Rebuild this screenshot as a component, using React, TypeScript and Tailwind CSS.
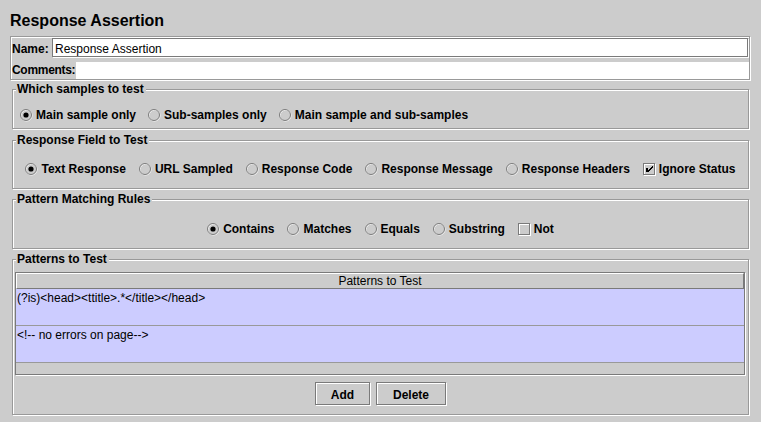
import React from 'react';

const Radio = ({ checked = false }: { checked?: boolean }) => (
  <svg width="13" height="13" viewBox="0 0 13 13" className="shrink-0">
    <circle cx="6.5" cy="6.5" r="5.5" fill="none" stroke="#ffffff" />
    <circle cx="6" cy="6" r="5.5" fill="none" stroke="#7a7a7a" />
    {checked && <circle cx="6" cy="6" r="2.6" fill="#000000" />}
  </svg>
);

const Checkbox = ({ checked = false }: { checked?: boolean }) => (
  <svg width="13" height="13" viewBox="0 0 13 13" className="shrink-0" shapeRendering="crispEdges">
    <rect x="1.5" y="1.5" width="11" height="11" fill="none" stroke="#ffffff" />
    <rect x="0.5" y="0.5" width="11" height="11" fill="none" stroke="#7a7a7a" />
    {checked && (
      <g fill="#000000">
        <rect x="3" y="5" width="2" height="4" />
        <path d="M9 3h1v1h-1zM8 4h2v1h-2zM7 5h2v1h-2zM6 6h2v1h-2zM5 7h2v1h-2zM5 8h1v1h-1z" />
      </g>
    )}
  </svg>
);

const Option = ({ label, checked, box }: { label: string; checked?: boolean; box?: boolean }) => (
  <div className="flex items-center gap-[3px]">
    {box ? <Checkbox checked={checked} /> : <Radio checked={checked} />}
    <span className="text-[12px] leading-[14px] font-bold whitespace-nowrap">{label}</span>
  </div>
);

const Group = ({
  title,
  className,
  children,
}: {
  title: string;
  className: string;
  children: React.ReactNode;
}) => (
  <div
    className={`relative mx-[2px] border border-[#999999] shadow-[inset_1px_1px_0_#ffffff,1px_1px_0_#ffffff] ${className}`}
  >
    <span className="absolute left-[3px] -top-[8px] bg-[#cccccc] pl-[1px] pr-[2px] text-[12px] leading-[14px] font-bold whitespace-nowrap">
      {title}
    </span>
    {children}
  </div>
);

const Button = ({ label, width }: { label: string; width: string }) => (
  <div
    className={`${width} h-[23px] pt-[2px] flex items-center justify-center border border-[#7a7a7a] shadow-[inset_1px_1px_0_#ffffff,1px_1px_0_#ffffff] text-[12px] leading-[14px] font-bold`}
  >
    {label}
  </div>
);

const patterns = ['(?is)<head><ttitle>.*</title></head>', '<!-- no errors on page-->'];

export default function App() {
  return (
    <div className="w-[761px] h-[422px] overflow-hidden bg-[#cccccc] px-[10px] flex flex-col text-black font-['Liberation_Sans',Arial,sans-serif]">
      <div className="h-[36px] pt-[11px] text-[16px] leading-[20px] font-bold">Response Assertion</div>

      {/* Name / comments */}
      <div className="h-[44px] mr-[1px] border border-[#999999] shadow-[inset_1px_1px_0_#ffffff,1px_1px_0_#ffffff] pt-[1px] flex flex-col">
        <div className="flex h-[20px]">
          <div className="w-[41px] pl-[1px] pt-[4px] text-[12px] leading-[14px] font-bold">Name:</div>
          <div className="flex-1 h-[19px] mr-[1px] bg-white border border-[#7a7a7a] shadow-[1px_1px_0_#ffffff] pl-[2px] pt-[3px] text-[12px] leading-[14px]">
            Response Assertion
          </div>
        </div>
        <div className="flex h-[17px] mt-[4px]">
          <div className="w-[65px] pl-[1px] pt-[1px] text-[12px] leading-[14px] font-bold whitespace-nowrap tracking-[-0.3px]">
            Comments:
          </div>
          <div className="flex-1 bg-white"></div>
        </div>
      </div>

      <Group title="Which samples to test" className="mt-[9px] h-[40px] pt-[18px]">
        <div className="flex items-center h-[14px] pl-[7px] gap-[12px]">
          <Option label="Main sample only" checked />
          <Option label="Sub-samples only" />
          <Option label="Main sample and sub-samples" />
        </div>
      </Group>

      <Group title="Response Field to Test" className="mt-[11px] h-[49px] pt-[21px]">
        <div className="flex items-center justify-center h-[14px] gap-[13px]">
          <Option label="Text Response" checked />
          <Option label="URL Sampled" />
          <Option label="Response Code" />
          <Option label="Response Message" />
          <Option label="Response Headers" />
          <Option label="Ignore Status" box checked />
        </div>
      </Group>

      <Group title="Pattern Matching Rules" className="mt-[10px] h-[50px] pt-[22px]">
        <div className="flex items-center justify-center h-[14px] gap-[13px]">
          <Option label="Contains" checked />
          <Option label="Matches" />
          <Option label="Equals" />
          <Option label="Substring" />
          <Option label="Not" box />
        </div>
      </Group>

      <Group title="Patterns to Test" className="mt-[10px] h-[156px] pt-[12px] flex flex-col">
        <div className="ml-[2px] mr-[3px] h-[103px] border border-[#7a7a7a] shadow-[1px_1px_0_#ffffff] flex flex-col">
          <div className="h-[16px] border-t border-l border-t-white border-l-white border-b border-r border-b-[#7a7a7a] border-r-[#7a7a7a] text-center text-[12px] leading-[14px]">
            Patterns to Test
          </div>
          {patterns.map((p, i) => (
            <div
              key={i}
              className="h-[37px] bg-[#ccccff] border-b border-[#999999] pl-[1px] pt-[2px] text-[12px] leading-[14px] whitespace-pre"
            >
              {p}
            </div>
          ))}
        </div>
        <div className="mt-[7px] flex justify-center gap-[6px]">
          <Button label="Add" width="w-[55px]" />
          <Button label="Delete" width="w-[70px]" />
        </div>
      </Group>
    </div>
  );
}
